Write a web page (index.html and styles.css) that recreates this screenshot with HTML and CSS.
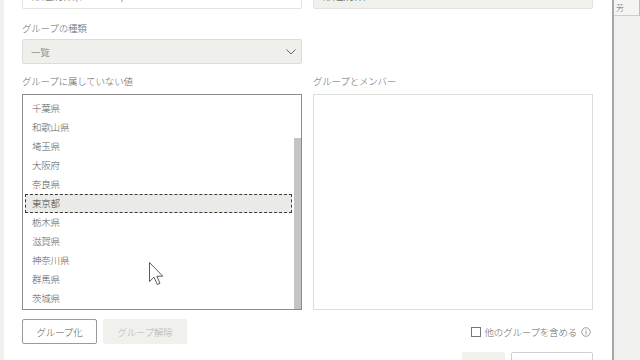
FILE: index.html
```html
<!DOCTYPE html>
<html lang="ja">
<head>
  <meta charset="UTF-8">
  <title>グループ</title>
  <link rel="stylesheet" href="styles.css">
</head>
<body>
  <div class="edge"></div>

  <div class="dialog">
    <div class="grid top">
      <div class="field">都道府県(ナンバー)</div>
      <div class="field disabled">都道府県</div>
    </div>

    <div class="label first">グループの種類</div>
    <div class="grid">
      <div class="select">
        <span>一覧</span>
        <svg width="10" height="6" viewBox="0 0 10 6"><path d="M0.5 0.5 L5 5 L9.5 0.5" fill="none" stroke="#666" stroke-width="1"/></svg>
      </div>
    </div>

    <div class="grid lists">
      <div>
        <div class="label">グループに属していない値</div>
        <div class="listbox focused">
          <ul class="items">
            <li>千葉県</li>
            <li>和歌山県</li>
            <li>埼玉県</li>
            <li>大阪府</li>
            <li>奈良県</li>
            <li class="selected">東京都</li>
            <li>栃木県</li>
            <li>滋賀県</li>
            <li>神奈川県</li>
            <li>群馬県</li>
            <li>茨城県</li>
          </ul>
          <div class="track"><div class="thumb"></div></div>
        </div>
      </div>
      <div>
        <div class="label">グループとメンバー</div>
        <div class="listbox"></div>
      </div>
    </div>

    <div class="grid actions">
      <div class="btns">
        <button class="btn">グループ化</button>
        <button class="btn off" disabled>グループ解除</button>
      </div>
      <div class="check">
        <span class="box"></span>
        <span>他のグループを含める</span>
        <svg width="10" height="10" viewBox="0 0 10 10"><circle cx="5" cy="5" r="4.3" fill="none" stroke="#888" stroke-width="0.8"/><rect x="4.55" y="4.2" width="0.9" height="3.2" fill="#888"/><rect x="4.55" y="2.5" width="0.9" height="0.9" fill="#888"/></svg>
      </div>
    </div>

    <div class="footer">
      <button class="btn gray"></button>
      <button class="btn wide"></button>
    </div>
  </div>

  <div class="side">
    <div class="side-head">芳</div>
  </div>

  <svg class="cursor" width="16" height="24" viewBox="0 0 16 24">
    <path d="M0.5 0.5 L0.5 19.5 L5 15.2 L8.3 22.5 L11 21.3 L7.8 14.2 L13.8 14.2 Z" fill="#fff" stroke="#333" stroke-width="0.8" stroke-linejoin="round"/>
  </svg>
</body>
</html>
```

FILE: styles.css
```css
* {
  box-sizing: border-box;
}
html, body {
  margin: 0;
  height: 360px;
  overflow: hidden;
}
body {
  display: flex;
  background-color: #f0f0ee;
  font-family: "Noto Sans CJK JP", "Noto Sans", sans-serif;
  font-size: 9.5px;
  font-weight: 300;
  letter-spacing: -0.2px;
  color: #666;
  position: relative;
}
.edge {
  width: 4px;
  flex: none;
}
.dialog {
  width: 608px;
  flex: none;
  background: #fff;
  padding: 0 19px 0 18px;
}
.grid {
  display: grid;
  grid-template-columns: 280px 280px;
  column-gap: 11px;
}
.top {
  margin-top: -17px;
}
.field {
  height: 26px;
  border: 1px solid #e2e2de;
  border-radius: 2px;
  padding: 1px 8px;
  line-height: 20px;
  color: #444;
  font-size: 11px;
}
.field.disabled {
  background: #f0f0ec;
  color: #333;
}
.label {
  height: 16px;
  line-height: 16px;
  margin-top: 9px;
}
.label.first {
  margin-top: 11px;
}
.select {
  margin-top: 3px;
  height: 25px;
  background: #efefeb;
  border: 1px solid #dcdcd8;
  border-radius: 2px;
  display: flex;
  align-items: center;
  justify-content: space-between;
  padding: 0 5px 0 8px;
}
.listbox {
  margin-top: 5px;
  height: 216px;
  border: 1px solid #dcdcd8;
  display: flex;
}
.listbox.focused {
  border-color: #8c8c8c;
}
.items {
  list-style: none;
  margin: 0;
  padding: 4px 0 0;
  flex: 1;
}
.items li {
  height: 19px;
  line-height: 17px;
  margin: 0 2px;
  padding-left: 6px;
  border: 1px solid transparent;
  color: #5a5a5a;
}
.items li.selected {
  background: #eaeae6;
  border: 1px dashed #3a3a3a;
  color: #444;
}
.track {
  width: 7px;
  padding-top: 43px;
  display: flex;
  flex-direction: column;
}
.thumb {
  flex: 1;
  background: #c4c4c4;
}
.actions {
  margin-top: 9px;
  height: 25px;
  align-items: center;
}
.btns {
  display: flex;
  gap: 6px;
}
.btn {
  height: 25px;
  border: 1px solid #9a9a9a;
  border-radius: 2px;
  background: #fff;
  font-family: inherit;
  font-size: 9.5px;
  font-weight: 300;
  letter-spacing: -0.2px;
  color: #555;
  padding: 0;
  width: 75px;
}
.btn.off {
  width: 84px;
  border-color: #f0f0ec;
  background: #f0f0ec;
  color: #b4b4b4;
}
.check {
  display: flex;
  justify-content: flex-end;
  align-items: center;
  gap: 4px;
  padding-right: 2px;
}
.box {
  width: 10px;
  height: 10px;
  border: 1px solid #777;
  background: #fff;
}
.footer {
  margin-top: 8px;
  display: flex;
  justify-content: flex-end;
  gap: 6px;
}
.btn.gray {
  width: 43px;
  height: 24px;
  background: #f0f0ec;
  border-color: #f0f0ec;
}
.btn.wide {
  width: 82px;
  height: 24px;
  border-color: #cfcfcf;
}
.side {
  flex: 1;
  border-left: 2px solid #a8a8a8;
  background: #f0f0ee;
}
.side-head {
  height: 16px;
  border-bottom: 1px solid #cdcdcb;
  border-right: 1px solid #bbb;
  background: #f4f4f2;
  font-size: 8px;
  line-height: 15px;
  padding-left: 2px;
  color: #666;
}
.cursor {
  position: absolute;
  left: 149px;
  top: 262px;
}
```
